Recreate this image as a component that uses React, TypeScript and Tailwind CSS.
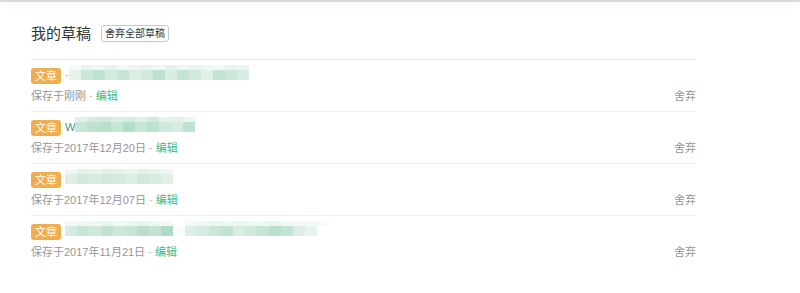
const drafts = [
  {
    saved: "保存于刚刚",
    lead: "·",
    top: ["#f4faf7", "#e9f5ef", "#eef7f2", "#e6f3ec", "#f2f9f5", "#edf6f1", "#e8f4ee", "#f0f8f4", "#e4f2eb", "#f1f8f4", "#eaf5ef", "#eef7f2", "#f3f9f6", "#e7f3ed", "#ecf6f0"],
    bottom: ["#e6f3ec", "#c9e7d8", "#bfe3d1", "#d2ebdf", "#c6e5d6", "#dbefe5", "#cfe9dc", "#bde2cf", "#d8eee3", "#c4e5d5", "#d0eadd", "#e1f1e9", "#c3e4d4", "#cde8db", "#d7ede2"],
  },
  {
    saved: "保存于2017年12月20日",
    lead: "W",
    top: ["#e2f1e9", "#d4ebe0", "#cfe9dc", "#dbefe5", "#d6ece1", "#e0f0e8", "#d2eade", "#e6f3ec", "#dff0e7", "#edf6f1"],
    bottom: ["#c8e6d7", "#bfe2d0", "#b9e0cc", "#c5e5d5", "#b3ddc8", "#c9e7d8", "#bde2cf", "#cfe9dc", "#d6ece1", "#c0e3d1"],
  },
  {
    saved: "保存于2017年12月07日",
    lead: "",
    top: ["#eef7f2", "#e4f2eb", "#e9f5ef", "#e1f1e9", "#e6f3ec", "#ecf6f0", "#e3f1ea", "#e8f4ee", "#eef7f2"],
    bottom: ["#dceee5", "#d2eade", "#d8ede2", "#cfe9dc", "#d5ebe0", "#dbefe5", "#d0e9dc", "#d7ede2", "#e0f0e8"],
  },
  {
    saved: "保存于2017年11月21日",
    lead: "",
    top: ["#f3f9f6", "#eef7f2", "#f1f8f4", "#eaf5ef", "#f0f8f4", "#ecf6f0", "#e8f4ee", "#eef7f2", "#f2f9f5", "#ffffff", "#f4faf7", "#eef7f2", "#edf6f1", "#f1f8f4", "#e9f5ef", "#eef7f2", "#f0f8f4", "#ebf5f0", "#f2f9f5", "#f5faf8", "#f3f9f6", "#f8fbf9"],
    bottom: ["#d5ece1", "#c8e6d7", "#d0e9dc", "#bfe3d1", "#cbe7d9", "#c6e5d6", "#b7dfcb", "#c3e4d4", "#afdbc5", "#fbfdfc", "#dceee5", "#d5ece1", "#c9e7d8", "#c2e4d3", "#d7ede2", "#cfe9dc", "#c5e5d5", "#b9e0cc", "#c3e4d4", "#daeee4", "#e7f3ed", "#ffffff"],
  },
]

function Mosaic({top,bottom}:{top:string[],bottom:string[]}) {
  return (
    <div className="flex flex-col mb-[7px]">
      <div className="flex">
        {top.map((c,i)=>(
          <div key={i} className="w-[12px] h-[5px]" style={{backgroundColor:c}}/>
        ))}
      </div>
      <div className="flex">
        {bottom.map((c,i)=>(
          <div key={i} className="w-[12px] h-[10px]" style={{backgroundColor:c}}/>
        ))}
      </div>
    </div>
  )
}

export default function App() {
  return (
    <div className="min-h-[293px] bg-white font-['Liberation_Sans','Noto_Sans_CJK_SC',sans-serif]">
      <div className="h-[2px] bg-[#dadada] shadow-[0_2px_8px_rgba(0,0,0,0.08)]"/>

      <div className="w-[665px] ml-[31px]">
        <div className="flex items-center mt-[23px] h-[17px]">
          <h2 className="text-[15px] text-[#333] leading-none">我的草稿</h2>
          <button className="ml-[10px] h-[17px] px-[3px] border border-[#c8c8c8] rounded-[3px] text-[10px] text-[#333] leading-none">
            舍弃全部草稿
          </button>
        </div>

        <div className="mt-[17px] border-t border-[#e3e3e3]">
          {drafts.map((d,i)=>(
            <div key={i} className={`pt-[6px] pb-[5px] ${i<drafts.length-1?"border-b border-[#efefef]":""}`}>
              <div className="flex items-center h-[20px]">
                <span className="h-[16px] px-[4px] rounded-[3px] bg-[#f0ad4e] text-white text-[11px] leading-[16px]">文章</span>
                <div className="flex items-center ml-[4px]">
                  {d.lead && <span className="text-[11px] text-[#3a9a76] leading-none mb-[2px]">{d.lead}</span>}
                  <Mosaic top={d.top} bottom={d.bottom}/>
                </div>
              </div>
              <div className="flex items-center justify-between h-[20px] text-[11px] text-[#969696]">
                <p>
                  {d.saved} · <a className="text-[#42b983]">编辑</a>
                </p>
                <a>舍弃</a>
              </div>
            </div>
          ))}
        </div>
      </div>
    </div>
  )
}
